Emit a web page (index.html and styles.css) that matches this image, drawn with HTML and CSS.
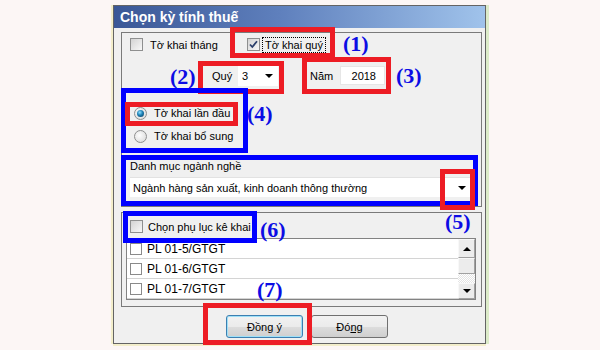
FILE: index.html
```html
<!DOCTYPE html>
<html>
<head>
	<meta charset="utf-8">
	<meta name="viewport" content="width=device-width, initial-scale=1">
	<link rel="stylesheet" href="styles.css">
</head>
<body>
<div class="screen">
   <div class="dialog">
      <div class="titlebar">Chọn kỳ tính thuế</div>
      <div class="content">
         <div class="group group-main">
            <div class="row-type">
               <label class="check first"><span class="box"></span>Tờ khai tháng</label>
               <label class="check checked">
                  <span class="box">
                     <svg width="11" height="11" viewBox="0 0 11 11"><path d="M2 5.5 L4.3 8 L9 2.3" fill="none" stroke="#2b3f6b" stroke-width="1.8"/></svg>
                  </span>
                  <span class="focus">Tờ khai quý</span>
               </label>
            </div>
            <div class="row-period">
               <span class="lbl-quy">Quý</span>
               <div class="combo combo-small"><span>3</span><span class="arrow"></span></div>
               <span class="lbl-nam">Năm</span>
               <div class="field">2018</div>
            </div>
            <div class="radios">
               <label class="radio on"><span class="dot"></span>Tờ khai lần đầu</label>
               <label class="radio"><span class="dot"></span>Tờ khai bổ sung</label>
            </div>
            <div class="caption">Danh mục ngành nghề</div>
            <div class="combo combo-wide"><span>Ngành hàng sản xuất, kinh doanh thông thường</span><span class="arrow"></span></div>
         </div>
         <div class="group group-annex">
            <label class="check annex-head"><span class="box"></span>Chọn phụ lục kê khai</label>
            <div class="list">
               <div class="rows">
                  <div class="item"><span class="box plain"></span>PL 01-5/GTGT</div>
                  <div class="item"><span class="box plain"></span>PL 01-6/GTGT</div>
                  <div class="item"><span class="box plain"></span>PL 01-7/GTGT</div>
               </div>
               <div class="scrollbar">
                  <div class="sb-btn"><span class="tri-up"></span></div>
                  <div class="sb-thumb"></div>
                  <div class="sb-track"></div>
                  <div class="sb-btn sb-down"><span class="tri-down"></span></div>
               </div>
            </div>
         </div>
         <div class="buttons">
            <button class="btn default">Đồng ý</button>
            <button class="btn">Đó<u>ng</u></button>
         </div>
      </div>
   </div>

   <!-- annotations drawn over the screenshot -->
   <div class="mark red m1"></div>
   <div class="mark red m2"></div>
   <div class="mark red m3"></div>
   <div class="mark blue m4"></div>
   <div class="mark red m4b"></div>
   <div class="mark blue m5"></div>
   <div class="mark red m5b"></div>
   <div class="mark blue m6"></div>
   <div class="mark red m7"></div>
   <span class="tag t1">(1)</span>
   <span class="tag t2">(2)</span>
   <span class="tag t3">(3)</span>
   <span class="tag t4">(4)</span>
   <span class="tag t5">(5)</span>
   <span class="tag t6">(6)</span>
   <span class="tag t7">(7)</span>
</div>
</body>
</html>
```

FILE: styles.css
```css
body {
   margin: 0;
   background: #fcf6f5;
   font-family: "Liberation Sans", Arial, sans-serif;
   font-size: 11px;
   color: #000;
}

.screen {
   position: relative;
   width: 600px;
   height: 350px;
   box-sizing: border-box;
   padding: 5px 0 0 113px;
   overflow: hidden;
}

.dialog {
   width: 373px;
   height: 339px;
   box-sizing: border-box;
   border: 1px solid #646464;
   background: #f0f0f0;
   box-shadow: -2px 0 0 #f3eecb, 0 2px 0 #f3eecb, 3px 0 0 #dcebc9;
}

.titlebar {
   height: 22px;
   line-height: 22px;
   padding-left: 6px;
   color: #fff;
   font-weight: bold;
   font-size: 14px;
   background: linear-gradient(to right, #3a5796, #5f80bd 45%, #a0c3eb);
}

.content {
   padding: 4px 3px 0 7px;
}

.group {
   width: 361px;
   box-sizing: border-box;
   border: 1px solid #7a7a7a;
}

.group-main {
   height: 175px;
}

.group-annex {
   height: 95px;
   margin-top: 5px;
}

/* checkboxes */
.check {
   display: flex;
   align-items: center;
   gap: 7px;
   height: 13px;
}

.check.first {
   width: 117px;
}

.check.checked {
   gap: 2px;
}

.box {
   flex: none;
   width: 13px;
   height: 13px;
   box-sizing: border-box;
   border: 1px solid #8e8f8f;
   background: linear-gradient(135deg, #d3d3d3, #f8f8f8);
   display: flex;
   align-items: center;
   justify-content: center;
}

.box.plain {
   width: 12px;
   height: 12px;
   border-color: #8a8a8a;
   background: #fff;
}

.focus {
   border: 1px dotted #000;
   padding: 1px 2px 1px 2px;
   line-height: 12px;
}

.row-type {
   display: flex;
   align-items: center;
   height: 13px;
   margin-top: 5px;
   padding-left: 8px;
}

.row-period {
   display: flex;
   align-items: center;
   height: 21px;
   margin-top: 14px;
   padding-left: 90px;
}

.lbl-quy {
   width: 26px;
}

.lbl-nam {
   width: 30px;
   margin-left: 32px;
}

.combo {
   display: flex;
   align-items: center;
   justify-content: space-between;
   box-sizing: border-box;
   background: #fff;
}

.combo-small {
   width: 40px;
   height: 21px;
   padding: 0 5px 0 4px;
}

.combo-wide {
   width: 341px;
   height: 20px;
   margin: 4px 0 0 8px;
   padding: 0 5px 0 3px;
   border-top: 1px solid #e2e2e2;
}

.arrow {
   width: 0;
   height: 0;
   border-left: 4px solid transparent;
   border-right: 4px solid transparent;
   border-top: 4px solid #000;
}

.field {
   width: 45px;
   height: 19px;
   line-height: 19px;
   box-sizing: border-box;
   padding-right: 8px;
   text-align: right;
   background: #fff;
   border: 1px solid #e6e6e6;
}

/* radios */
.radios {
   display: flex;
   flex-direction: column;
   gap: 5px;
   margin-top: 18px;
   padding-left: 12px;
}

.radio {
   display: flex;
   align-items: center;
   gap: 7px;
   height: 18px;
}

.dot {
   width: 13px;
   height: 13px;
   box-sizing: border-box;
   border-radius: 50%;
   border: 1px solid #8e8f8f;
   background: radial-gradient(circle at 40% 40%, #fdfdfd, #d6d6d6);
   display: flex;
   align-items: center;
   justify-content: center;
}

.radio.on .dot::after {
   content: "";
   width: 7px;
   height: 7px;
   border-radius: 50%;
   background: radial-gradient(circle at 40% 35%, #8fe0ff, #1c7fb4 45%, #0c3552);
}

.caption {
   margin-top: 14px;
   padding-left: 8px;
   height: 14px;
   line-height: 14px;
}

/* annex list */
.annex-head {
   margin: 7px 0 0 8px;
   gap: 5px;
}

.list {
   display: flex;
   width: 350px;
   height: 62px;
   margin: 5px 0 0 4px;
   box-sizing: border-box;
   border: 1px solid #828282;
   background: #fff;
}

.rows {
   flex: 1;
}

.item {
   display: flex;
   align-items: center;
   gap: 5px;
   height: 19px;
   padding-left: 3px;
   border-bottom: 1px solid #d4d4d4;
   font-size: 12px;
}

.scrollbar {
   width: 17px;
   display: flex;
   flex-direction: column;
}

.sb-btn,
.sb-thumb {
   box-sizing: border-box;
   border: 1px solid;
   border-color: #f8f8f8 #a0a0a0 #a0a0a0 #f8f8f8;
   background: #ececec;
   display: flex;
   align-items: center;
   justify-content: center;
}

.sb-btn {
   height: 19px;
}

.sb-down {
   height: 16px;
}

.sb-thumb {
   height: 16px;
}

.sb-track {
   flex: 1;
   background: repeating-conic-gradient(#e4e4e4 0 25%, #fff 0 50%) 0 0 / 2px 2px;
}

.tri-up,
.tri-down {
   width: 0;
   height: 0;
   border-left: 4px solid transparent;
   border-right: 4px solid transparent;
}

.tri-up {
   border-bottom: 4px solid #000;
}

.tri-down {
   border-top: 4px solid #000;
}

/* buttons */
.buttons {
   display: flex;
   gap: 8px;
   margin-top: 8px;
   padding-left: 105px;
}

.btn {
   width: 77px;
   height: 23px;
   padding: 0;
   font-family: "Liberation Sans", Arial, sans-serif;
   font-size: 11px;
   color: #000;
   border: 1px solid #707070;
   border-radius: 3px;
   background: linear-gradient(#f2f2f2, #ebebeb 50%, #dddddd 51%, #cfcfcf);
}

.btn.default {
   border-color: #3c7fb1;
   box-shadow: inset 0 0 0 1px #9fe0f7;
}

/* annotations */
.mark {
   position: absolute;
   box-sizing: border-box;
   border: 5px solid;
}

.red {
   border-color: #ed1c24;
}

.blue {
   border-color: #0000ff;
}

.m1 { left: 230px; top: 27px; width: 105px; height: 31px; }
.m2 { left: 198px; top: 61px; width: 86px; height: 33px; }
.m3 { left: 302px; top: 57px; width: 89px; height: 37px; }
.m4 { left: 121px; top: 88px; width: 127px; height: 65px; }
.m4b { left: 125px; top: 102px; width: 113px; height: 24px; }
.m5 { left: 121px; top: 155px; width: 357px; height: 51px; }
.m5b { left: 440px; top: 169px; width: 35px; height: 41px; }
.m6 { left: 123px; top: 211px; width: 134px; height: 32px; }
.m7 { left: 203px; top: 303px; width: 109px; height: 42px; }

.tag {
   position: absolute;
   font-family: "Liberation Serif", "Times New Roman", serif;
   font-weight: bold;
   font-size: 22px;
   line-height: 22px;
   color: #0c0ce4;
}

.t1 { left: 343px; top: 33px; }
.t2 { left: 170px; top: 66px; }
.t3 { left: 396px; top: 65px; }
.t4 { left: 247px; top: 103px; }
.t5 { left: 445px; top: 211px; }
.t6 { left: 260px; top: 219px; }
.t7 { left: 257px; top: 279px; }
```
